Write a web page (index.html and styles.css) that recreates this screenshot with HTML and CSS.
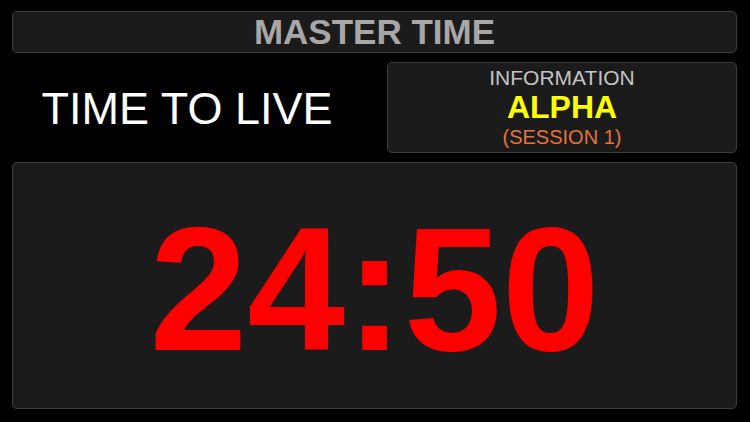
FILE: index.html
```html
<!DOCTYPE html>
<html lang="en">
<head>
<meta charset="utf-8">
<title>Master Time</title>
<link rel="stylesheet" href="styles.css">
</head>
<body>
<div class="screen">
  <header class="panel title-bar">MASTER TIME</header>
  <div class="middle">
    <div class="label">TIME TO LIVE</div>
    <div class="panel info">
      <div class="info-head">INFORMATION</div>
      <div class="info-name">ALPHA</div>
      <div class="info-sub">(SESSION 1)</div>
    </div>
  </div>
  <main class="panel clock">24:50</main>
</div>
</body>
</html>
```

FILE: styles.css
```css
html, body {
  margin: 0;
  padding: 0;
  background: #000;
}
body {
  width: 750px;
  height: 422px;
  overflow: hidden;
  font-family: "Liberation Sans", Arial, Helvetica, sans-serif;
}
.screen {
  box-sizing: border-box;
  height: 422px;
  padding: 11px 13px 13px 12px;
  display: flex;
  flex-direction: column;
  gap: 9px;
}
.panel {
  box-sizing: border-box;
  background: #1b1b1b;
  border: 1px solid #3c3c3c;
  border-radius: 5px;
}
.title-bar {
  height: 42px;
  text-align: center;
  color: #a7a7a7;
  font-weight: bold;
  font-size: 35px;
  line-height: 40px;
}
.middle {
  display: flex;
  gap: 12px;
  height: 91px;
}
.label {
  flex: 1;
  display: flex;
  align-items: center;
  justify-content: center;
  padding: 2px 13px 0 0;
  color: #fff;
  font-size: 45px;
  line-height: 45px;
}
.info {
  width: 350px;
  display: flex;
  flex-direction: column;
  justify-content: center;
  align-items: center;
}
.info-head {
  color: #c4c4c4;
  font-size: 21px;
  line-height: 24px;
}
.info-name {
  color: #ffff00;
  font-weight: bold;
  font-size: 32px;
  line-height: 35px;
}
.info-sub {
  color: #e2733c;
  font-size: 20px;
  line-height: 24px;
}
.clock {
  flex: 1;
  display: flex;
  align-items: center;
  justify-content: center;
  padding-top: 7px;
  color: #ff0000;
  font-weight: bold;
  font-size: 176px;
  line-height: 176px;
}
```
